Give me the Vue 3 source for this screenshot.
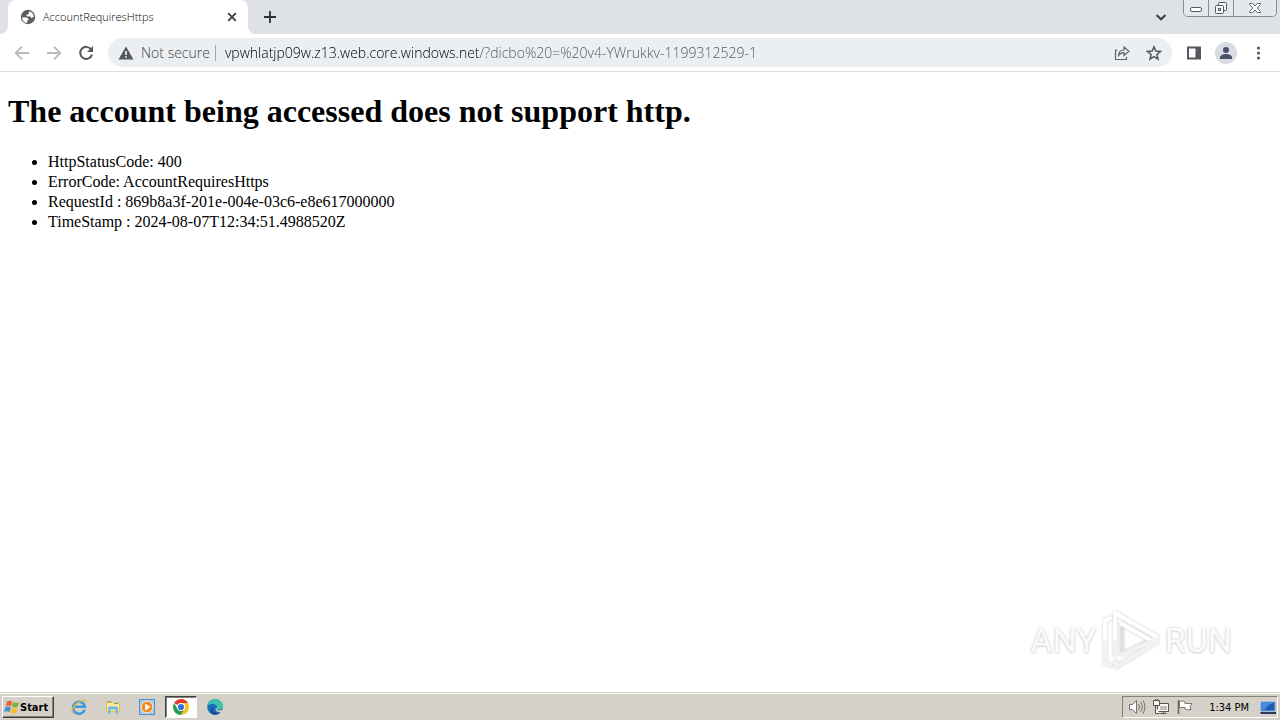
<script setup>
import { ref } from 'vue'

const address = ref('vpwhlatjp09w.z13.web.core.windows.net/?dicbo%20=%20v4-YWrukkv-1199312529-1')
const details = [
  'HttpStatusCode: 400',
  'ErrorCode: AccountRequiresHttps',
  'RequestId : 869b8a3f-201e-004e-03c6-e8e617000000',
  'TimeStamp : 2024-08-07T12:34:51.4988520Z'
]
</script>

<template>
  <div class="screen">
    <header class="tabstrip">
      <div class="edge"></div>
      <div class="tab">
        <svg class="globe" viewBox="0 0 16 16" width="16" height="16" aria-hidden="true">
          <circle cx="8" cy="8" r="7.2" fill="#5a5e63" />
          <path d="M2.2 8.2 7 8.6 8.8 10.2 7.4 11.4 7.2 14C4.2 13.8 2 11.4 2.2 8.2ZM9 2.2C11.8 2.6 13.8 5 13.8 7.8L11.4 9 9.8 7.2 7.2 7.6 6.2 6.2 8.8 4.8Z" fill="#fff" />
        </svg>
        <span class="tab-title">AccountRequiresHttps</span>
        <button class="plain close" aria-label="Close tab">
          <svg viewBox="0 0 16 16" width="16" height="16"><path d="M4.2 4.2l7.6 7.6M11.8 4.2l-7.6 7.6" stroke="#3c4043" stroke-width="1.8" /></svg>
        </button>
      </div>
      <button class="plain newtab" aria-label="New tab">
        <svg viewBox="0 0 16 16" width="16" height="16"><path d="M8 2v12M2 8h12" stroke="#303236" stroke-width="1.8" /></svg>
      </button>
      <button class="plain search-tabs" aria-label="Search tabs">
        <svg viewBox="0 0 16 16" width="16" height="16"><path d="M3.5 6 8 10.3 12.5 6" fill="none" stroke="#3c4043" stroke-width="2" /></svg>
      </button>
      <div class="winbuttons">
        <button aria-label="Minimize">
          <svg viewBox="0 0 16 16" width="16" height="16"><rect x="2.5" y="7.5" width="11" height="4" rx="1.5" fill="#fff" stroke="#555962" /></svg>
        </button>
        <button aria-label="Restore">
          <svg viewBox="0 0 16 16" width="16" height="16"><g fill="#f4f5f7" stroke="#555962"><rect x="5.5" y="2.5" width="8" height="8" rx="1" /><rect x="2.5" y="5.5" width="8" height="8" rx="1" /><rect x="5.5" y="8.5" width="2" height="2" /></g></svg>
        </button>
        <button class="wide" aria-label="Close">
          <svg viewBox="0 0 16 16" width="16" height="16"><path d="M2.5 3.5h3.3L8 6l2.2-2.5h3.3v1L10.2 8l3.3 3.5v1h-3.3L8 10l-2.2 2.5H2.5v-1L5.8 8 2.5 4.500Z" fill="#fff" stroke="#626771" /></svg>
        </button>
      </div>
    </header>

    <nav class="toolbar">
      <button class="plain nav" aria-label="Back">
        <svg viewBox="0 0 16 16" width="16" height="16"><path d="M15 8H2M8 1.700 1.700 8 8 14.300" fill="none" stroke="#b8babd" stroke-width="1.800" /></svg>
      </button>
      <button class="plain nav" aria-label="Forward">
        <svg viewBox="0 0 16 16" width="16" height="16"><path d="M1 8h13M8 1.700 14.300 8 8 14.300" fill="none" stroke="#b8babd" stroke-width="1.800" /></svg>
      </button>
      <button class="plain nav reload" aria-label="Reload">
        <svg viewBox="0 0 16 16" width="16" height="16"><path d="M13.200 4.500A6 6 0 1 0 14 9.500" fill="none" stroke="#54575b" stroke-width="2" /><path d="M15 1v6H9Z" fill="#54575b" /></svg>
      </button>
      <div class="omnibox">
        <button class="plain security">
          <svg viewBox="0 0 16 16" width="16" height="16" aria-hidden="true"><path d="M8 1.500 15.500 14.500H.5Z" fill="#54575b" /><path d="M8 6v4M8 11.200v1.600" stroke="#fff" stroke-width="1.600" /></svg>
          <span>Not secure</span>
        </button>
        <input v-model="address" class="address" type="text" aria-label="Address and search bar" spellcheck="false" />
        <button class="plain" aria-label="Share">
          <svg viewBox="0 0 16 16" width="16" height="16"><path d="M3.500 5h-2v9.500h11V12M4.500 10.500C4.700 6.800 6.600 5 10 5V2l5 4.300-5 4.200V7.700C7.500 7.700 5.800 8.600 4.500 10.500Z" fill="none" stroke="#5f6368" stroke-width="1.200" /></svg>
        </button>
        <button class="plain star" aria-label="Bookmark this tab">
          <svg viewBox="0 0 16 16" width="16" height="16"><path d="m8 1.800 1.800 4.300 4.700.4-3.600 3 1.100 4.600L8 11.600l-4 2.500 1.100-4.600-3.600-3 4.700-.4Z" fill="none" stroke="#54575b" stroke-width="1.500" /></svg>
        </button>
      </div>
      <button class="plain side" aria-label="Side panel">
        <svg viewBox="0 0 16 16" width="16" height="16"><path d="M1 1.500h14v13H1ZM3 3.500v9h6.500v-9Z" fill="#54575b" fill-rule="evenodd" /></svg>
      </button>
      <button class="plain profile" aria-label="Profile">
        <svg viewBox="0 0 22 22" width="22" height="22"><circle cx="11" cy="11" r="11" fill="#d9dde3" /><circle cx="11" cy="8" r="3" fill="#48536b" /><path d="M5 17v-1.500C5 13.300 8 12 11 12s6 1.300 6 3.500V17Z" fill="#48536b" /></svg>
      </button>
      <button class="plain menu" aria-label="Menu">
        <svg viewBox="0 0 16 16" width="16" height="16"><g fill="#54575b"><circle cx="8.500" cy="3" r="1.600" /><circle cx="8.500" cy="8" r="1.600" /><circle cx="8.500" cy="13" r="1.600" /></g></svg>
      </button>
    </nav>

    <main class="page">
      <h1>The account being accessed does not support http.</h1>
      <ul>
        <li v-for="line in details" :key="line">{{ line }}</li>
      </ul>
      <div class="watermark">
        <span>ANY</span>
        <svg viewBox="0 0 60 64" width="60" height="64" aria-hidden="true">
          <g fill="none" stroke-linejoin="round" stroke-linecap="round">
            <g class="halo" stroke="#dcdcdc" stroke-width="5"><path d="M9 10 4 13V55L9 57M14 46V5L56 29 51 33 21 16V46L56 29M15 54v5l41-25" /></g>
            <g stroke="#fff" stroke-width="4"><path d="M9 10 4 13V34M14 34V5L56 29 51 33 21 16" /></g>
            <path d="M4 34V55L9 57M14 34V46M21 46 56 31M15 54v5l41-25" stroke="#f2f2f2" stroke-width="4" />
          </g>
        </svg>
        <span>RUN</span>
      </div>
    </main>

    <footer class="taskbar">
      <button class="start">
        <svg viewBox="0 0 16 16" width="16" height="16" aria-hidden="true">
          <path d="M3 2.500Q6 .8 8.300 2.700L7 7.500Q4.500 5.800 1.700 7.300Z" fill="#e5652e" />
          <path d="M9.200 3Q12 4.700 15.200 3L13.700 7.800Q10.700 9.300 8 7.600Z" fill="#78b43c" />
          <path d="M1.400 8.300Q4.200 6.800 6.700 8.500L5.400 13.200Q3 11.600 0 13.100Z" fill="#438fd3" />
          <path d="M7.700 8.700Q10.500 10.400 13.400 8.800L12 13.600Q9.300 15.100 6.400 13.400Z" fill="#f3bd26" />
        </svg>
        <span>Start</span>
      </button>
      <div class="launchers">
        <button class="app" aria-label="Internet Explorer">
          <svg viewBox="0 0 16 16" width="16" height="16"><path d="M13.700 10.800A6 6 0 1 1 14 7.700H4" fill="none" stroke="#3b9bdd" stroke-width="2.500" /><path d="M2 15C-1 12 3 5.500 9 2.300c3.500-2 6.800-1.700 5.800 1.500" fill="none" stroke="#e9b83b" stroke-width="1.300" /></svg>
        </button>
        <button class="app" aria-label="Windows Explorer">
          <svg viewBox="0 0 16 16" width="16" height="16"><path d="M1 2h5l1 1.500h8V13H1Z" fill="#e5bf55" /><path d="M2 4h12v8H2Z" fill="#fbe9a1" /><path d="M3 9q0-1.500 1.500-1.500h7Q13 7.500 13 9v5.500h-2.500V10.500h-5v4H3Z" fill="#72bce0" /><path d="M3 3h3M9 4.500h4" stroke="#5ba967" /></svg>
        </button>
        <button class="app" aria-label="Media Player">
          <svg viewBox="0 0 16 16" width="16" height="16"><rect x=".5" y=".5" width="15" height="15" fill="#a9cde9" stroke="#4c91c6" /><circle cx="8" cy="8" r="5.800" fill="#f18a1d" stroke="#f8e2c0" /><path d="M6.200 4.500 11.500 8l-5.300 3.500Z" fill="#fff" /></svg>
        </button>
        <button class="app active" aria-label="Google Chrome">
          <svg viewBox="0 0 16 16" width="16" height="16"><path d="M8 8 1.100 4A8 8 0 0 1 14.900 4Z" fill="#e4392f" /><path d="M8 8V4h6.900A8 8 0 0 1 8 16l3.400-6Z" fill="#fbc21b" /><path d="M8 8l3.400 2L8 16A8 8 0 0 1 1.100 4L4.500 10Z" fill="#279b50" /><circle cx="8" cy="8" r="4" fill="#fff" /><circle cx="8" cy="8" r="3.100" fill="#3374df" /></svg>
        </button>
        <button class="app" aria-label="Microsoft Edge">
          <svg viewBox="0 0 16 16" width="16" height="16"><circle cx="8" cy="8" r="7.800" fill="#176fbc" /><path d="M.3 7C1 2.800 4 .2 8 .2c4.500 0 7.800 3.200 7.800 6.500 0 3-2.500 4.300-5 3.900-1.500-.3-1.300-1.200-.7-2C10.300 5 4 3.500.3 7Z" fill="#37bdbd" /><path d="M8 .2c4.500 0 7.800 3.200 7.800 6.500 0 3-2.500 4.300-5 3.900-1.500-.3-1.300-1.200-.7-2C10.500 6 9 4 7 3.500Z" fill="#48c98d" opacity=".55" /><path d="M5.500 8C5 12 9 15 13.800 13.300A8 8 0 0 1 7 15.700C2.500 15 2.500 9.500 5.500 8Z" fill="#164c9c" /><path d="M9.800 8.600c-1.300 2 .8 4.300 5.900 1.800l-1.200 2.900C10.500 14 6.500 11 9.800 8.600Z" fill="#d5d0c8" /></svg>
        </button>
      </div>
      <div class="tray">
        <svg viewBox="0 0 18 18" width="18" height="18" aria-label="Volume" role="img"><path d="M1.500 6.500h3L8.500 2.500v13L4.500 11.500h-3Z" fill="#fff" stroke="#77736c" /><path d="M10.500 6q2 3 0 6M12.700 4.200q3.200 4.800 0 9.600M15 2.500q4 6.500 0 13" fill="none" stroke="#77736c" /></svg>
        <svg viewBox="0 0 18 18" width="18" height="18" aria-label="Network" role="img"><g fill="#f7f6f2" stroke="#55514c"><path d="M5.500 5.500h11v8h-11ZM8.500 15.500h6M11.500 13.500v2" /><path d="M1.500 2.500h6v5h-6ZM3.500 1v2M5.500 1v2M3.500 7.500v8h4" /></g><path d="M8 8h7v4H8Z" fill="#c3c0b9" /></svg>
        <svg viewBox="0 0 18 18" width="18" height="18" aria-label="Action Center" role="img"><path d="M2.500 2v14" stroke="#66625d" stroke-width="1.500" /><path d="M3.500 3.500q3-1.500 5.500.5v1.500h7l-2 3 1 3q-4 1-6-.5v-1.500H3.500Z" fill="#fff" stroke="#77736c" /></svg>
        <time>1:34 PM</time>
        <svg viewBox="0 0 16 16" width="16" height="16" aria-label="Show desktop" role="img"><path d="M1 3h14v9H1Z" fill="#205bb5" stroke="#76aade" /><path d="M1.500 3.500h13Q8 5 4 11.500H1.500Z" fill="#438ee0" /><path d="M0 13h16v2H1Z" fill="#293b58" /></svg>
      </div>
    </footer>
  </div>
</template>

<style>
body {
  margin: 0;
}
</style>

<style scoped>
* {
  box-sizing: border-box;
}
.screen {
  min-height: 100vh;
  display: flex;
  flex-direction: column;
  background: #fff;
  font-family: "Open Sans", "Noto Sans", sans-serif;
}
svg {
  display: block;
  flex: none;
}
button {
  font: inherit;
  cursor: pointer;
}
.plain {
  display: flex;
  align-items: center;
  justify-content: center;
  padding: 0;
  border: 0;
  background: none;
}
.tabstrip {
  display: flex;
  height: 34px;
  background: #dee1e6;
}
.edge {
  width: 8px;
  background: #fff;
}
.edge::before {
  content: "";
  display: block;
  height: 100%;
  background: #dee1e6;
  border-bottom-right-radius: 8px;
}
.tab {
  display: flex;
  align-items: center;
  width: 240px;
  padding: 0 8px 0 12px;
  border-radius: 8px 8px 0 0;
  background: #fff;
}
.tab-title {
  flex: 1;
  margin-left: 7px;
  color: #000;
  font-size: 11px;
  font-weight: 300;
  line-height: 14px;
}
.newtab {
  width: 44px;
  background: radial-gradient(circle at 100% 0, #dee1e6 8px, #fff 8px) 0 100% / 8px 8px no-repeat;
}
.search-tabs {
  margin-left: auto;
}
.winbuttons {
  display: flex;
  height: 17px;
  margin: 0 3px 0 14px;
  border: 1px solid #868a93;
  border-top: 0;
  border-radius: 0 0 5px 5px;
  overflow: hidden;
}
.winbuttons button {
  display: flex;
  align-items: center;
  justify-content: center;
  width: 25px;
  padding: 0;
  border: 0;
  border-right: 1px solid #868a93;
  background: #e4e7eb;
}
.winbuttons .wide {
  width: 42px;
  border-right: 0;
}
.toolbar {
  display: flex;
  align-items: center;
  height: 38px;
  padding: 0 14px;
  border-bottom: 1px solid #dadce0;
}
.nav {
  margin-right: 16px;
}
.reload {
  margin-right: 14px;
}
.omnibox {
  flex: 1;
  display: flex;
  align-items: center;
  height: 29px;
  margin-right: 14px;
  padding: 0 10px;
  border-radius: 15px;
  background: #eceff1;
  font-size: 14px;
  font-weight: 300;
}
.security {
  gap: 7px;
  padding-right: 5px;
  border-right: 1px solid #a4a7ab;
  line-height: 16px;
  color: #3f4348;
}
.address {
  flex: 1;
  min-width: 0;
  height: 24px;
  padding: 0 0 0 9px;
  border: 0;
  outline: 0;
  background: linear-gradient(90deg, #000 264px, #50545a 264px);
  background-clip: text;
  -webkit-background-clip: text;
  color: transparent;
  caret-color: #000;
  font: inherit;
}
.star {
  margin: 0 0 0 16px;
}
.profile {
  margin: 0 13px;
}
.page {
  flex: 1;
  position: relative;
  padding: 0 8px;
  color: #000;
  font-family: "Liberation Serif", serif;
  font-size: 16px;
  line-height: 20px;
}
h1 {
  margin: 21px 0 23px;
  font-size: 32px;
  line-height: 36px;
}
ul {
  margin: 0;
  padding-left: 40px;
}
.watermark {
  position: absolute;
  right: 48px;
  bottom: 20px;
  display: flex;
  align-items: center;
  gap: 4px;
  color: #fbfbfb;
  font: 34px/64px "Roboto", sans-serif;
  text-shadow: 0 0 3px #ccc, 0 1px 2px #ddd;
}
.halo {
  filter: blur(1px);
}
.taskbar {
  display: flex;
  align-items: center;
  height: 28px;
  padding: 1px 2px 0;
  background: #d5d0c8;
  border-top: 1px solid #d5d0c8;
  box-shadow: inset 0 1px #fff;
}
.start {
  display: flex;
  align-items: center;
  width: 52px;
  height: 22px;
  padding: 0 1px;
  border: 1px solid #fff;
  border-right-color: #404040;
  border-bottom-color: #404040;
  background: #d5d0c8;
  box-shadow: inset -1px -1px #858179;
  font: bold 11px "DejaVu Sans Condensed", "DejaVu Sans", sans-serif;
}
.launchers {
  display: flex;
  gap: 2px;
  margin-left: 9px;
}
.app {
  display: flex;
  align-items: center;
  justify-content: center;
  width: 32px;
  height: 22px;
  padding: 0;
  border: 0;
  background: none;
}
.active {
  border: 1px solid #fff;
  border-top-color: #404040;
  border-left-color: #404040;
  background: #fff;
  box-shadow: inset 1px 1px #858179;
}
.tray {
  display: flex;
  align-items: center;
  gap: 6px;
  height: 22px;
  margin-left: auto;
  padding: 0 1px 0 5px;
  border: 1px solid #fff;
  border-top-color: #858179;
  border-left-color: #858179;
}
time {
  margin: 0 5px 0 9px;
  font: 11px "DejaVu Sans Condensed", sans-serif;
}
</style>
